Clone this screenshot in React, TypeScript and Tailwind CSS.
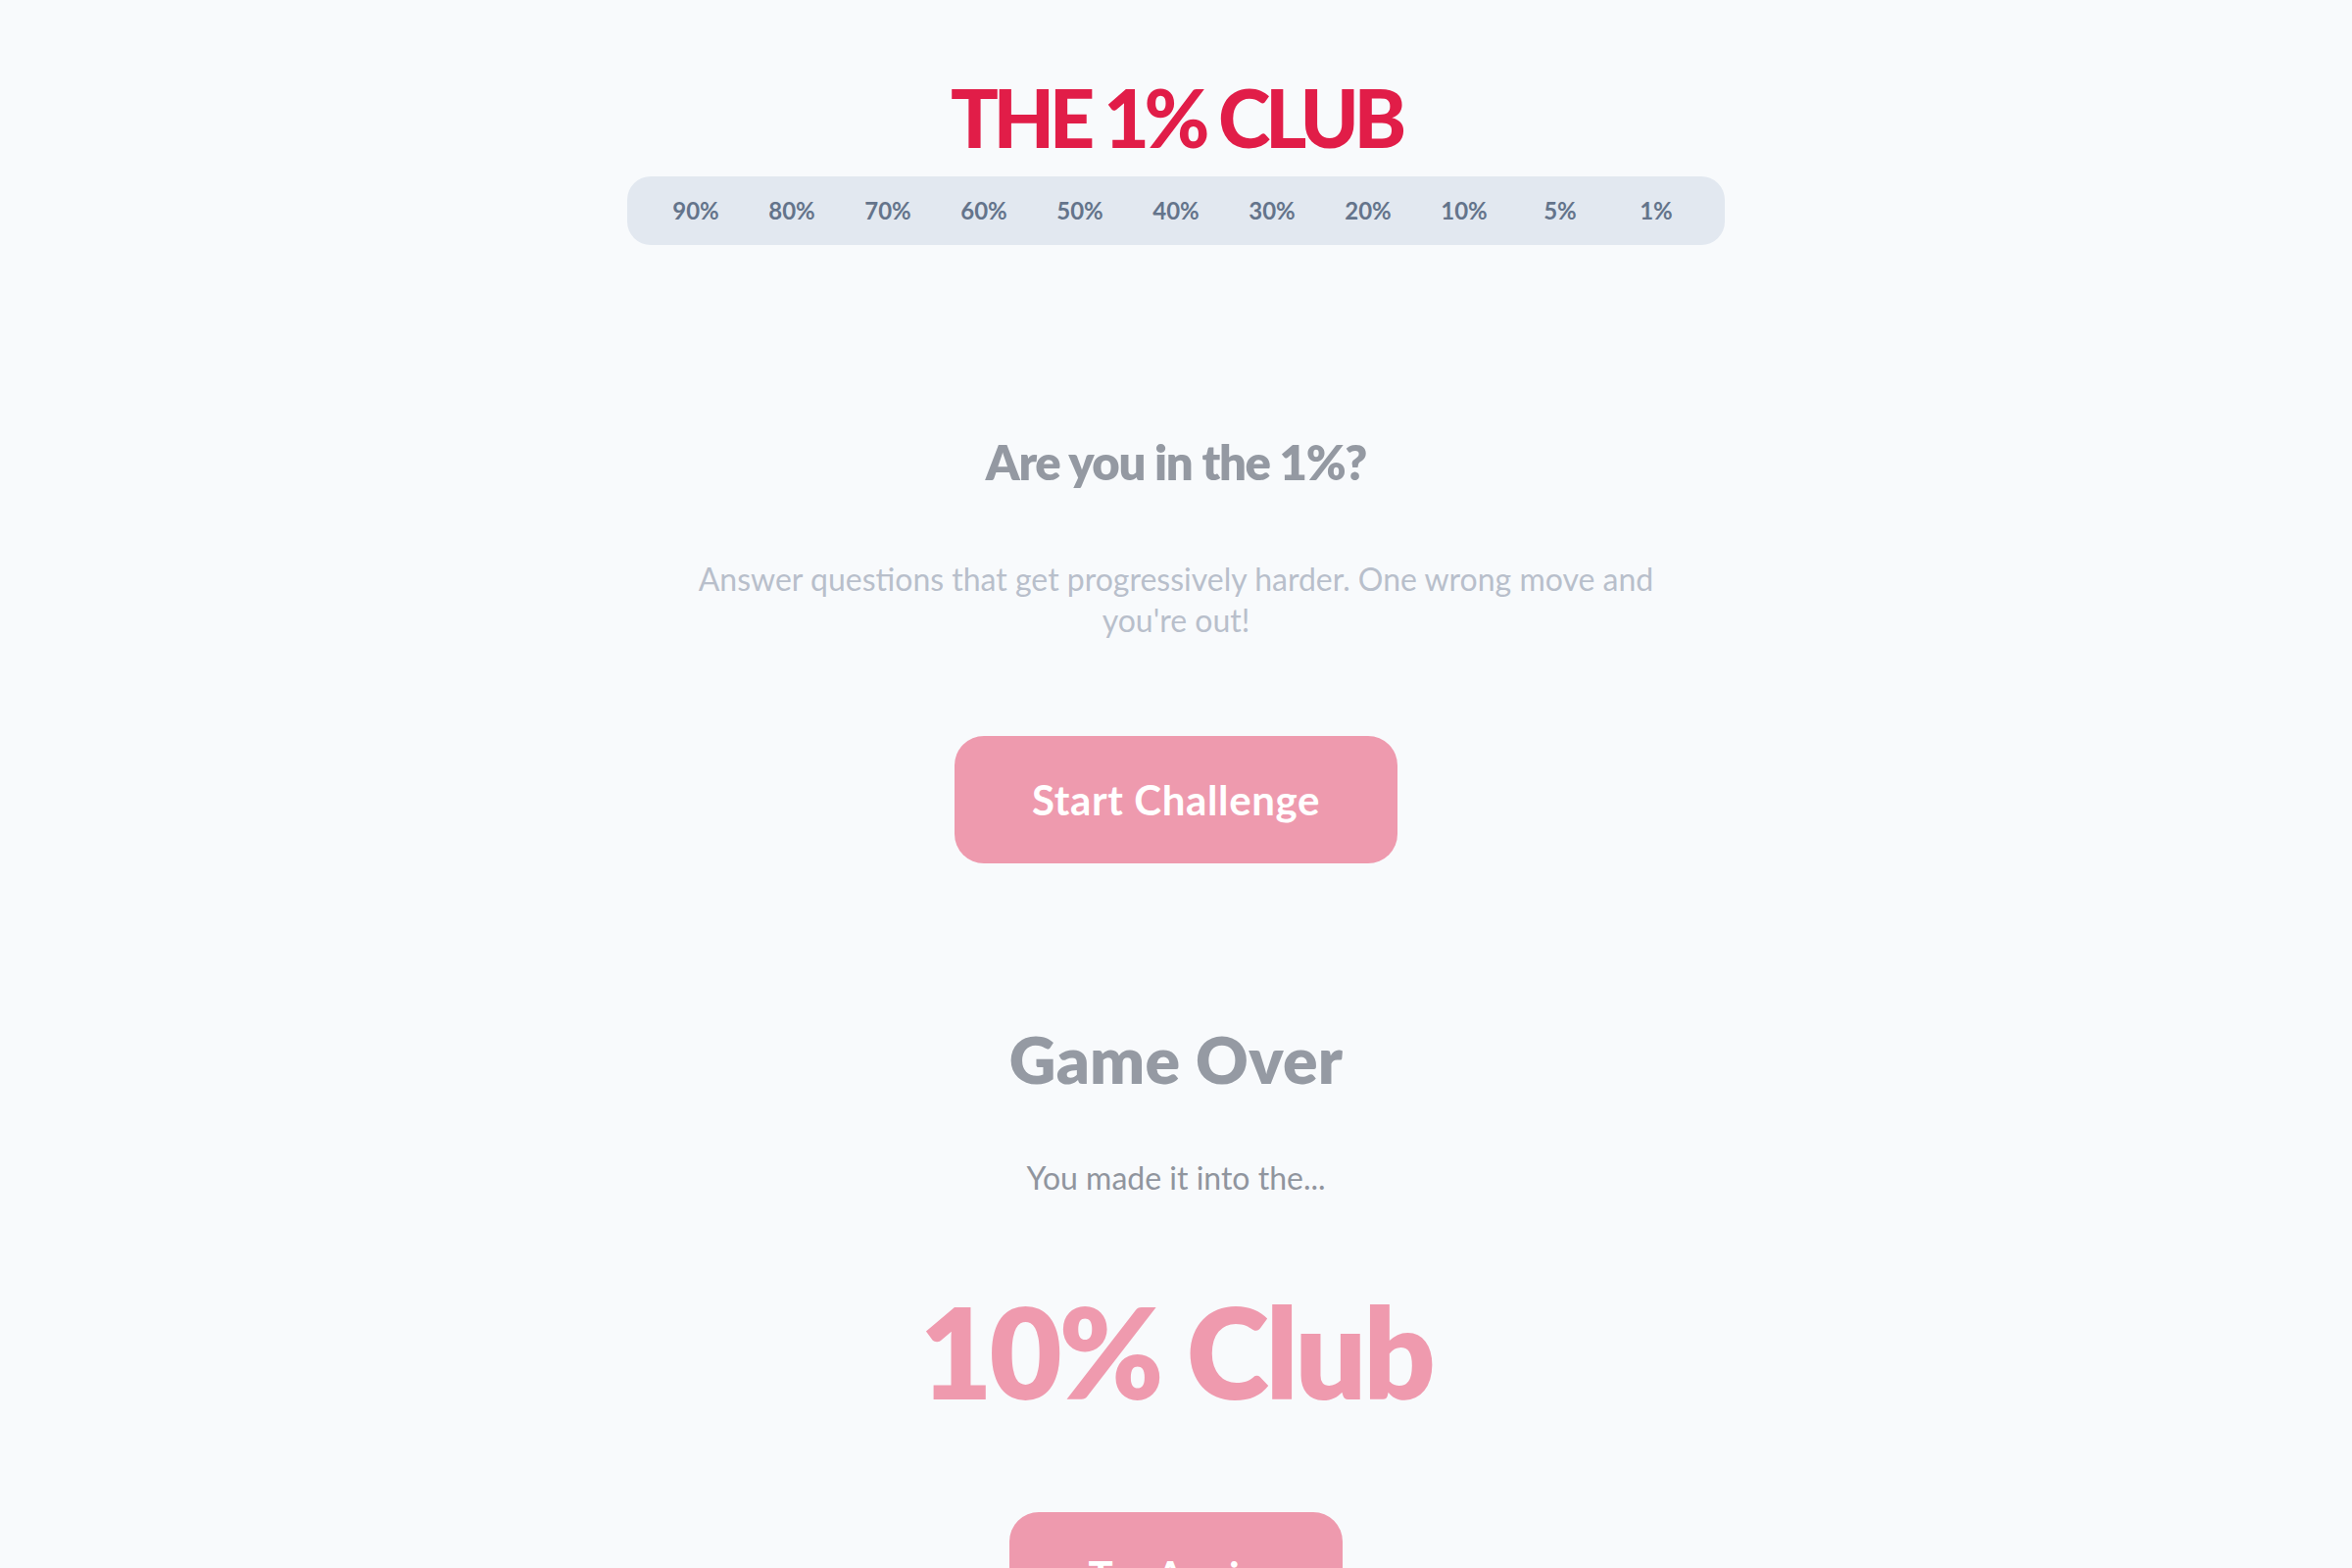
const LEVELS = ["90%", "80%", "70%", "60%", "50%", "40%", "30%", "20%", "10%", "5%", "1%"];

function PinkButton({ label, width }: { label: string; width: string }) {
    return (
        <button
            className={`${width} h-[130px] shrink-0 rounded-[30px] bg-[#ee9aae] text-white text-[42px] font-bold tracking-[0.015em] leading-none flex items-center justify-center`}
        >
            {label}
        </button>
    );
}

export default function App() {
    return (
        <div className="min-h-screen bg-[#f8fafc] flex flex-col items-center font-['Lato','Noto_Sans',sans-serif]">
            {/* Header */}
            <h1 className="mt-[79px] text-[81px] leading-[81px] font-black tracking-[-0.066em] text-[#e11d48]">
                THE 1% CLUB
            </h1>
            <div className="mt-[20px] h-[70px] rounded-[24px] bg-[#e2e8f0] px-[21px] flex items-center">
                {LEVELS.map((level) => (
                    <span key={level} className="w-[98px] text-center text-[24px] leading-none font-bold text-[#64748b]">
                        {level}
                    </span>
                ))}
            </div>

            {/* Intro */}
            <h2 className="mt-[197px] text-[49px] leading-[49px] font-extrabold tracking-[-0.027em] text-[#9499a2]">
                Are you in the 1%?
            </h2>
            <p className="mt-[74px] max-w-[1000px] text-center text-[32px] leading-[42px] text-[#b8bfcb]">
                Answer questions that get progressively harder. One wrong move and you're out!
            </p>
            <div className="mt-[97px]">
                <PinkButton label="Start Challenge" width="w-[452px]" />
            </div>

            {/* Result */}
            <h2 className="mt-[167px] text-[66px] leading-[66px] font-extrabold tracking-[0.005em] text-[#959aa3]">Game Over</h2>
            <p className="mt-[67px] text-[32px] leading-[42px] text-[#90959e]">You made it into the...</p>
            <div className="mt-[92px] text-[128px] leading-[128px] font-extrabold tracking-[-0.025em] text-[#ef9aae]">
                10% Club
            </div>
            <div className="mt-[100px] pb-[40px]">
                <PinkButton label="Try Again" width="w-[340px]" />
            </div>
        </div>
    );
}
